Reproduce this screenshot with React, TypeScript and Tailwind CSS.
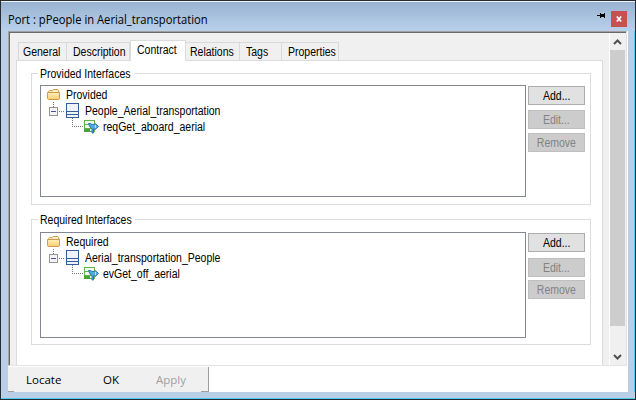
import React from "react";

const ui = "font-['Liberation_Sans',Arial,sans-serif] text-[12px] leading-[14px] whitespace-pre";
const segoe = "font-['Open_Sans','Noto_Sans',sans-serif] leading-[16px] whitespace-pre";

function Narrow({ children, center }: { children: React.ReactNode; center?: boolean }) {
  return <span className={`inline-block scale-x-[0.875] ${center ? "origin-center" : "origin-left"}`}>{children}</span>;
}

function FolderIcon() {
  return (
    <svg width="14" height="12" viewBox="0 0 14 12" className="shrink-0">
      <defs>
        <linearGradient id="folder" x1="0" y1="0" x2="0" y2="1">
          <stop offset="0" stopColor="#fff0b9" />
          <stop offset="1" stopColor="#fbcc72" />
        </linearGradient>
      </defs>
      <path d="M1.5 9.5v-7l.8-.8h3l1-1.2h4.4l1 1.4v1l.8.8v5.8z" fill="#fff1c4" stroke="#cb9a4a" />
      <path d="M.5 3.5h12v6.2l-.8.8H1.3l-.8-.8z" fill="url(#folder)" stroke="#cb9a4a" />
    </svg>
  );
}

function TreeLines() {
  return (
    <svg width="54" height="39" viewBox="0 3 54 39" className="shrink-0" shapeRendering="crispEdges">
      <path d="M5.5 3v5M11 12.5h6M24.5 19v9M24 27.5h11" stroke="#777" strokeDasharray="1 1" />
      <rect x="1.5" y="8.5" width="8" height="8" fill="#f4f4f4" stroke="#949494" />
      <path d="M3 12.5h5" stroke="#4054a0" />
      <rect x="18.5" y="4.5" width="12" height="14" fill="#eef4fc" stroke="#345c98" />
      <path d="M19 12.5h11M19 15.5h11" stroke="#345c98" />
      <rect x="36.5" y="21.5" width="10" height="11" fill="#f2faed" stroke="#62b04a" />
      <path d="M37 25.5h9M37 29.5h9" stroke="#62b04a" />
      <rect x="36" y="30" width="6" height="3" fill="#4da235" />
      <g shapeRendering="geometricPrecision">
        <path d="M40.5 24.5h2.2l1 .9h2.6l1-.9 3.2 3-3.2 3-1-.8h-.8v4.3h-1.5v-4.3l-2-1.7z" fill="#52a9e0" stroke="#2a78b4" />
        <path d="M47.5 26.2v2.6" stroke="#c7e8fb" />
      </g>
    </svg>
  );
}

function Tree({ root, node, leaf }: { root: string; node: string; leaf: string }) {
  return (
    <>
      <div className="flex h-[16px] items-center gap-[5px] pl-[6px] pt-[2px]">
        <FolderIcon />
        <span className={ui}><Narrow>{root}</Narrow></span>
      </div>
      <div className="flex pl-[7px]">
        <TreeLines />
        <div className="-ml-[17px] pt-[1px]">
          <div className={`h-[16px] ${ui} leading-[16px]!`}><Narrow>{node}</Narrow></div>
          <div className={`h-[16px] pl-[18px] ${ui} leading-[16px]!`}><Narrow>{leaf}</Narrow></div>
        </div>
      </div>
    </>
  );
}

function Btn({ label, off }: { label: string; off?: boolean }) {
  return (
    <button className={`block h-[19px] w-[57px] border text-center ${ui} leading-[18px]! ${off ? "border-[#bfbfbf] bg-[#ccc] text-[#838383]" : "border-[#adadad] bg-[#e1e1e1] text-black"}`}>
      <Narrow center>{label}</Narrow>
    </button>
  );
}

type GroupProps = { title: string; height: string; list: string; top: string; gap: string; lastGap: string; tree: React.ReactNode };

function Group({ title, height, list, top, gap, lastGap, tree }: GroupProps) {
  return (
    <fieldset className={`relative w-[560px] border border-[#dcdcdc] ${height}`}>
      <span className="absolute -top-px left-[6px] h-px w-[97px] bg-white" />
      <span className={`absolute -top-[7px] left-[8px] ${ui}`}><Narrow>{title}</Narrow></span>
      <div className={`flex pl-[8px] ${top}`}>
        <div className={`w-[486px] border border-[#828790] bg-white ${list}`}>{tree}</div>
        <div className="ml-[2px] pt-[1px]">
          <Btn label="Add..." />
          <div className={gap}><Btn label="Edit..." off /></div>
          <div className={lastGap}><Btn label="Remove" off /></div>
        </div>
      </div>
    </fieldset>
  );
}

function Tab({ label, width, pad, active }: { label: string; width: string; pad: string; active?: boolean }) {
  return active ? (
    <div className={`relative z-10 -mb-px h-[21px] border border-b-0 border-[#dcdcdc] bg-white pt-[2px] ${ui} ${width} ${pad}`}><Narrow>{label}</Narrow></div>
  ) : (
    <div className={`h-[18px] border border-b-0 border-l-0 border-[#d9d9d9] bg-[#f0f0f0] pt-[2px] ${ui} ${width} ${pad}`}><Narrow>{label}</Narrow></div>
  );
}

export default function App() {
  return (
    <div className="flex h-[400px] w-[636px] flex-col overflow-hidden border border-[#282b32] bg-[#b9cfe8] text-black">
      <div className="h-px shrink-0 bg-[#edf5fc]" />
      <header className="flex h-[29px] shrink-0 bg-linear-to-b from-[#98b3d1] to-[#b9d0eb]">
        <span className={`w-[260px] pl-[7px] pt-[10px] text-[12.5px] ${segoe}`}>
          <span className="inline-block origin-left scale-x-[0.897]">Port : pPeople in Aerial_transportation</span>
        </span>
        <svg width="8" height="5" viewBox="0 0 8 5" className="ml-auto mt-[11px]" shapeRendering="crispEdges">
          <path d="M0 2h3V0h1v1h3V0h1v5H7V4H4v1H3V3H0z" />
        </svg>
        <div className="ml-[6px] mr-[8px] mt-[9px] grid h-[16px] w-[16px] place-items-center bg-[#c75050]">
          <svg width="6" height="6" viewBox="0 0 6 6"><path d="M.8.5l4.4 5M5.2.5l-4.4 5" stroke="white" strokeWidth="1.7" /></svg>
        </div>
      </header>
      <div className="flex min-h-0 flex-1">
        <div className="w-[7px] bg-[#b9cfe8]" />
        <div className="flex w-[620px] flex-col bg-white">
          <main className="flex h-[335px] w-[619px] shrink-0 border border-[#a0a0a0] border-b-[#e3e3e3] border-r-[#e3e3e3] bg-[#f0f0f0]">
            <div className="flex min-w-0 flex-1 border-l border-t border-[#696969]">
              <div className="w-[593px] shrink-0 pl-[6px]">
                <div className="flex h-[27px] items-end pl-[2px]">
                  <Tab label="General" width="w-[49px] border-l!" pad="pl-[4px]" />
                  <Tab label="Description" width="w-[63px]" pad="pl-[6px]" />
                  <Tab label="Contract" width="w-[56px]" pad="pl-[6px]" active />
                  <Tab label="Relations" width="w-[54px]" pad="pl-[4px]" />
                  <Tab label="Tags" width="w-[42px]" pad="pl-[6px]" />
                  <Tab label="Properties" width="w-[57px]" pad="pl-[6px]" />
                </div>
                <div className="h-[305px] w-[587px] border border-b-0 border-[#dcdcdc] bg-white pl-[14px] pt-[12px]">
                  <Group title="Provided Interfaces" height="h-[132px]" list="h-[112px]" top="pt-[11px]" gap="pt-[5px]" lastGap="pt-[4px]" tree={<Tree root="Provided" node="People_Aerial_transportation" leaf="reqGet_aboard_aerial" />} />
                  <div className="h-[14px]" />
                  <Group title="Required Interfaces" height="h-[126px]" list="h-[106px]" top="pt-[12px]" gap="pt-[6px]" lastGap="pt-[3px]" tree={<Tree root="Required" node="Aerial_transportation_People" leaf="evGet_off_aerial" />} />
                </div>
              </div>
              <div className="ml-[6px] flex w-[16px] flex-col items-center border-l border-white">
                <div className="grid h-[17px] place-items-center"><svg width="9" height="6" viewBox="0 0 9 6"><path d="M1 5l3.5-3.5L8 5" fill="none" stroke="#505050" strokeWidth="2" /></svg></div>
                <div className="h-[276px] w-[15px] bg-[#cdcdcd]" />
                <div className="grid flex-1 place-items-center pt-[22px]"><svg width="9" height="6" viewBox="0 0 9 6"><path d="M1 1l3.5 3.5L8 1" fill="none" stroke="#505050" strokeWidth="2" /></svg></div>
              </div>
            </div>
          </main>
          <footer className={`relative mt-px flex h-[25px] w-[201px] shrink-0 items-center border-r border-[#a0a0a0] bg-[#f0f0f0] text-[11.5px] ${segoe}`}>
            <span className="w-[77px] pl-[18px]">Locate</span>
            <span className="w-[53px] pl-[18px]">OK</span>
            <span className="pl-[18px] text-[#a0a0a0]">Apply</span>
            <span className="absolute bottom-0 left-0 h-px w-[6px] bg-[#a0a0a0]" />
            <span className="absolute bottom-0 right-0 h-px w-[7px] bg-[#a0a0a0]" />
          </footer>
        </div>
        <div className="ml-auto w-px bg-[#4bd0f3]" />
      </div>
      <div className="h-[6px] shrink-0 bg-[#b9cfe8]" />
      <div className="h-px shrink-0 bg-[#4bd0f3]" />
    </div>
  );
}
